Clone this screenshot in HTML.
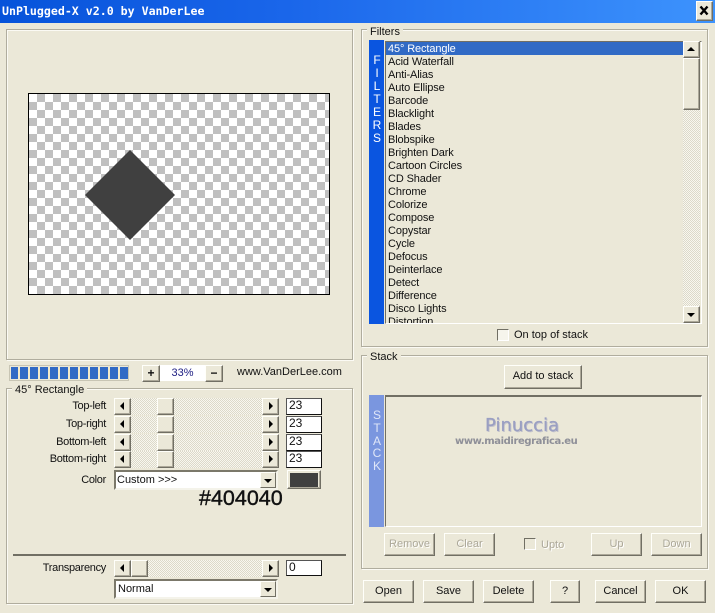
<!DOCTYPE html>
<html><head><meta charset="utf-8"><style>
html,body{margin:0;padding:0;width:715px;height:613px;overflow:hidden;background:#ebe8d8}
*{box-sizing:border-box}
body{position:relative;font:11px/13px "Liberation Sans",sans-serif;color:#111}
.a,.t,.btn,.grp,.edit,.sb,.ic{position:absolute}
.t{white-space:nowrap}
.grp{border:1px solid #b0ad9e;box-shadow:inset 1px 1px 0 #fbfaf4,1px 1px 0 #fbfaf4}
.leg{position:absolute;background:#ebe8d8;padding:0 3px;white-space:nowrap;height:13px;font-size:11px}
.btn{background:#ebe8d8;border:1px solid;border-color:#fffffa #716f64 #716f64 #fffffa;box-shadow:inset -1px -1px 0 #aca899;text-align:center;font-size:11px;white-space:nowrap}
.dis{color:#aca899;text-shadow:1px 1px 0 #fff}
.edit{background:#fff;border:1px solid;border-color:#555 #111 #111 #555;padding:0 0 0 2px;font-size:12px;line-height:13px}
.sb{height:17px;left:114px;width:165px;background:repeating-conic-gradient(#f8f7ef 0 25%,#dcd9c9 0 50%) 0 0/2px 2px}
.sb i{position:absolute;top:0;height:17px;width:17px;background:#ebe8d8;border:1px solid;border-color:#fffffa #716f64 #716f64 #fffffa;box-shadow:inset -1px -1px 0 #aca899}
.tl::after,.tr::after,.tu::after,.td::after{content:"";position:absolute;width:0;height:0}
.tl::after{left:5px;top:3px;border:4px solid transparent;border-left:0;border-right:4px solid #000}
.tr::after{left:6px;top:3px;border:4px solid transparent;border-right:0;border-left:4px solid #000}
.tu::after{left:3px;top:5px;border:4px solid transparent;border-top:0;border-bottom:4px solid #000}
.td::after{left:3px;top:6px;border:4px solid transparent;border-bottom:0;border-top:4px solid #000}
.sunk{border:1px solid;border-color:#716f64 #fff #fff #716f64;position:absolute}
.lb{position:absolute;left:0;width:106px;text-align:right;white-space:nowrap;font-size:11px;letter-spacing:-.3px}
.combo{position:absolute;left:114px;width:164px;height:20px;background:#fff;border:2px solid;border-color:#7b786a #f4f3ea #f4f3ea #7b786a;padding:2px 0 0 1px;font-size:11px}
.combo i{position:absolute;right:0;top:0;width:16px;height:16px;background:#ebe8d8;border:1px solid;border-color:#fffffa #716f64 #716f64 #fffffa}
.vl{position:absolute;color:#fff;text-align:center;width:16px;font-size:12px;line-height:13px}
.it{position:absolute;left:388px;white-space:nowrap;font-size:11px;letter-spacing:-.12px;line-height:13px;color:#111}
</style></head><body>
<div class="a" style="left:0;top:0;width:715px;height:23px;background:linear-gradient(90deg,#0653da,#1a66ea 40%,#3d93fd)"></div>
<div class="t" style="left:2px;top:3px;font:bold 11.6px/16px 'DejaVu Sans Mono',monospace;color:#fff">UnPlugged-X v2.0 by VanDerLee</div>
<div class="btn" style="left:696px;top:1px;width:17px;height:20px"></div>
<svg class="a" style="left:696px;top:1px" width="17" height="20"><path d="M4.5 5.5L11.5 13.5M11.5 5.5L4.5 13.5" stroke="#000" stroke-width="2.4" fill="none"/></svg>

<div class="grp" style="left:6px;top:29px;width:347px;height:331px"></div>
<div class="a" style="left:28px;top:93px;width:302px;height:202px;border:1px solid #000;background:repeating-conic-gradient(#c0c0c0 0 25%,#fff 0 50%) 0 0/16px 16px"></div>
<svg class="a" style="left:28px;top:93px" width="302" height="202"><polygon points="102,57 147,102 102,147 57,102" fill="#404040"/></svg>

<div class="a" style="left:9px;top:365px;width:120px;height:16px;background:#f5f3e6;border:1px solid #c8c5b4;background-image:repeating-linear-gradient(90deg,#316ac5 0 8px,#f3e9c8 8px 10px);background-clip:content-box;padding:1px 0 1px 1px"></div>
<div class="btn" style="left:142px;top:365px;width:18px;height:17px;font:bold 12px/14px 'Liberation Sans',sans-serif">+</div>
<div class="a" style="left:160px;top:365px;width:45px;height:16px;background:#fff;color:#1a1a80;text-align:center;line-height:16px;font-size:11px">33%</div>
<div class="btn" style="left:205px;top:365px;width:18px;height:17px;font:bold 12px/14px 'Liberation Sans',sans-serif">−</div>
<div class="t" style="left:237px;top:366px;font-size:11px">www.VanDerLee.com</div>

<div class="grp" style="left:6px;top:388px;width:347px;height:216px"></div>
<div class="leg" style="left:12px;top:384px">45° Rectangle</div>

<div class="lb" style="top:400px">Top-left</div>
<div class="sb" style="top:398px"><i class="tl" style="left:0"></i><i style="left:43px"></i><i class="tr" style="left:148px"></i></div>
<div class="edit" style="left:286px;top:398px;width:36px;height:17px">23</div>
<div class="lb" style="top:418px">Top-right</div>
<div class="sb" style="top:416px"><i class="tl" style="left:0"></i><i style="left:43px"></i><i class="tr" style="left:148px"></i></div>
<div class="edit" style="left:286px;top:416px;width:36px;height:17px">23</div>
<div class="lb" style="top:436px">Bottom-left</div>
<div class="sb" style="top:434px"><i class="tl" style="left:0"></i><i style="left:43px"></i><i class="tr" style="left:148px"></i></div>
<div class="edit" style="left:286px;top:434px;width:36px;height:17px">23</div>
<div class="lb" style="top:453px">Bottom-right</div>
<div class="sb" style="top:451px"><i class="tl" style="left:0"></i><i style="left:43px"></i><i class="tr" style="left:148px"></i></div>
<div class="edit" style="left:286px;top:451px;width:36px;height:17px">23</div>

<div class="lb" style="top:474px">Color</div>
<div class="combo" style="top:470px">Custom &gt;&gt;&gt;<i class="td"></i></div>
<div class="btn" style="left:287px;top:470px;width:34px;height:19px;background:#ebe8d8"><div class="a" style="left:2px;top:2px;width:28px;height:14px;background:#404040"></div></div>
<div class="t" style="left:199px;top:486px;font:21.5px/25px 'Liberation Sans',sans-serif;color:#111;-webkit-text-stroke:.4px #111">#404040</div>

<div class="a" style="left:13px;top:554px;width:333px;height:2px;background:#716f64"></div>
<div class="lb" style="top:562px">Transparency</div>
<div class="sb" style="top:560px"><i class="tl" style="left:0"></i><i style="left:17px"></i><i class="tr" style="left:148px"></i></div>
<div class="edit" style="left:286px;top:560px;width:36px;height:16px">0</div>
<div class="combo" style="top:579px;padding-left:2px">Normal<i class="td"></i></div>

<div class="grp" style="left:361px;top:29px;width:347px;height:318px"></div>
<div class="leg" style="left:367px;top:26px">Filters</div>
<div class="a" style="left:369px;top:40px;width:15px;height:284px;background:#0a55e0"></div>
<div class="vl" style="left:369px;top:54px">F<br>I<br>L<br>T<br>E<br>R<br>S</div>
<div class="sunk" style="left:385px;top:41px;width:317px;height:283px;overflow:hidden"></div>
<div class="a" style="left:386px;top:42px;width:297px;height:13px;background:#316ac5"></div>
<div class="it" style="top:43px;color:#fff">45° Rectangle</div>
<div class="it" style="top:56px">Acid Waterfall</div>
<div class="it" style="top:69px">Anti-Alias</div>
<div class="it" style="top:82px">Auto Ellipse</div>
<div class="it" style="top:95px">Barcode</div>
<div class="it" style="top:108px">Blacklight</div>
<div class="it" style="top:121px">Blades</div>
<div class="it" style="top:134px">Blobspike</div>
<div class="it" style="top:147px">Brighten Dark</div>
<div class="it" style="top:160px">Cartoon Circles</div>
<div class="it" style="top:173px">CD Shader</div>
<div class="it" style="top:186px">Chrome</div>
<div class="it" style="top:199px">Colorize</div>
<div class="it" style="top:212px">Compose</div>
<div class="it" style="top:225px">Copystar</div>
<div class="it" style="top:238px">Cycle</div>
<div class="it" style="top:251px">Defocus</div>
<div class="it" style="top:264px">Deinterlace</div>
<div class="it" style="top:277px">Detect</div>
<div class="it" style="top:290px">Difference</div>
<div class="it" style="top:303px">Disco Lights</div>
<div class="a" style="left:386px;top:316px;width:297px;height:7px;overflow:hidden"><div class="it" style="left:2px;top:0">Distortion</div></div>

<div class="a" style="left:683px;top:41px;width:17px;height:282px;background:repeating-conic-gradient(#f8f7ef 0 25%,#dcd9c9 0 50%) 0 0/2px 2px"></div>
<div class="btn tu" style="left:683px;top:41px;width:17px;height:17px"></div>
<div class="btn" style="left:683px;top:58px;width:17px;height:52px"></div>
<div class="btn td" style="left:683px;top:306px;width:17px;height:17px"></div>

<div class="a" style="left:497px;top:329px;width:12px;height:12px;background:#f6f5ec;border:1px solid;border-color:#716f64 #fff #fff #716f64"></div>
<div class="t" style="left:514px;top:329px;font-size:11px">On top of stack</div>

<div class="grp" style="left:361px;top:355px;width:347px;height:214px"></div>
<div class="leg" style="left:367px;top:351px">Stack</div>
<div class="btn" style="left:504px;top:365px;width:78px;height:24px;line-height:21px">Add to stack</div>
<div class="a" style="left:369px;top:395px;width:15px;height:132px;background:#7a96df"></div>
<div class="vl" style="left:369px;top:409px;color:#dfe6f8;line-height:12.8px">S<br>T<br>A<br>C<br>K</div>
<div class="sunk" style="left:385px;top:395px;width:317px;height:132px;border-width:2px 1px 1px 1px"></div>
<div class="t" style="left:485px;top:415px;font:18px/22px 'DejaVu Sans',sans-serif;color:#9a9fc2;text-shadow:1px 1px 0 #c4c4cc;-webkit-text-stroke:.3px #9a9fc2">Pinuccia</div>
<div class="t" style="left:455px;top:435px;font:bold 10px/14px 'DejaVu Sans',sans-serif;color:#8e8f98;letter-spacing:-.4px">www.maidiregrafica.eu</div>

<div class="btn dis" style="left:384px;top:533px;width:51px;height:23px;line-height:20px">Remove</div>
<div class="btn dis" style="left:444px;top:533px;width:51px;height:23px;line-height:20px">Clear</div>
<div class="a" style="left:524px;top:538px;width:12px;height:12px;border:1px solid;border-color:#716f64 #fff #fff #716f64"></div>
<div class="t dis" style="left:541px;top:539px;font-size:11px">Upto</div>
<div class="btn dis" style="left:591px;top:533px;width:51px;height:23px;line-height:20px">Up</div>
<div class="btn dis" style="left:651px;top:533px;width:51px;height:23px;line-height:20px">Down</div>

<div class="btn" style="left:363px;top:580px;width:51px;height:23px;line-height:20px">Open</div>
<div class="btn" style="left:423px;top:580px;width:51px;height:23px;line-height:20px">Save</div>
<div class="btn" style="left:483px;top:580px;width:51px;height:23px;line-height:20px">Delete</div>
<div class="btn" style="left:550px;top:580px;width:30px;height:23px;line-height:20px">?</div>
<div class="btn" style="left:595px;top:580px;width:51px;height:23px;line-height:20px">Cancel</div>
<div class="btn" style="left:655px;top:580px;width:51px;height:23px;line-height:20px">OK</div>
</body></html>
